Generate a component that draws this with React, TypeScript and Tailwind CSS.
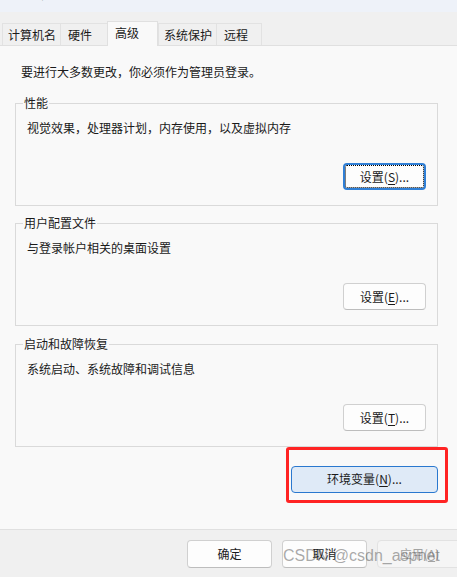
import React from "react";

const cjk = "font-['Noto_Sans_CJK_SC','Noto_Sans',sans-serif]";

type Tab = { label: string; w: string; pl: string; active?: boolean };

const tabs: Tab[] = [
  { label: "计算机名", w: "w-[58px]", pl: "pl-[5px]" },
  { label: "硬件", w: "w-[47px]", pl: "pl-[7px]" },
  { label: "高级", w: "w-[51px]", pl: "pl-[7px]", active: true },
  { label: "系统保护", w: "w-[58px]", pl: "pl-[5px]" },
  { label: "远程", w: "w-[46px]", pl: "pl-[7px]" },
];

const Mn = ({ children }: { children: React.ReactNode }) => (
  <span className="underline underline-offset-[2px] decoration-1">{children}</span>
);

const SetButton = ({ k, focused }: { k: string; focused?: boolean }) => (
  <button
    type="button"
    className={
      focused
        ? "self-end h-[27px] w-[83px] rounded-[4px] border-2 border-[#2f7fd6] bg-[#fdfdfd] text-[12px] leading-[16px] text-[#1a1a1a] outline-1 outline-dotted outline-black outline-offset-[-3px]"
        : "self-end h-[27px] w-[83px] rounded-[4px] border border-[#d0d0d0] border-b-[#bdbdbd] bg-[#fdfdfd] text-[12px] leading-[16px] text-[#1a1a1a]"
    }
  >
    设置(<Mn>{k}</Mn>)...
  </button>
);

type GroupProps = {
  title: string;
  desc: string;
  k: string;
  className?: string;
  focused?: boolean;
};

const Group = ({ title, desc, k, className = "", focused }: GroupProps) => (
  <div
    className={`relative ml-[15px] mr-[19px] flex h-[103px] flex-col border border-[#dadada] pl-[11px] pr-[11px] pt-[16px] ${className}`}
  >
    <span className="absolute left-[7px] -top-[9px] bg-[#f9f9f9] px-[1px] text-[12px] leading-[16px] text-[#1a1a1a]">
      {title}
    </span>
    <p className="text-[12px] leading-[16px] text-[#1a1a1a]">{desc}</p>
    <div className="mt-[27px] flex justify-end">
      <SetButton k={k} focused={focused} />
    </div>
  </div>
);

const FooterButton = ({
  children,
  disabled,
}: {
  children: React.ReactNode;
  disabled?: boolean;
}) => (
  <button
    type="button"
    className={
      disabled
        ? "h-[28px] w-[85px] shrink-0 rounded-[4px] border border-[#e2e2e2] bg-[#f5f5f5] text-[12px] leading-[16px] text-[#a3a3a3]"
        : "h-[28px] w-[85px] shrink-0 rounded-[4px] border border-[#d0d0d0] border-b-[#bdbdbd] bg-[#fdfdfd] text-[12px] leading-[16px] text-[#1a1a1a]"
    }
  >
    {children}
  </button>
);

export default function App() {
  return (
    <div className={`relative h-[577px] w-[457px] overflow-hidden bg-[#f9f9f9] ${cjk}`}>
      {/* title bar, cut off at the top */}
      <div className="h-[12px] overflow-hidden bg-[#eef2f9] pl-[4px]">
        <div className="-mt-[14px] text-[12px] leading-[16px] text-[#1a1a1a]">系统属性</div>
      </div>

      {/* tabs */}
      <div className="flex h-[34px] items-end border-b border-[#e0e0e0] bg-[#f0f0f0] pl-[2px]">
        {tabs.map((t, i) =>
          t.active ? (
            <div
              key={t.label}
              className={`relative z-10 -mb-px flex h-[25px] ${t.w} items-center border-x border-t border-[#e0e0e0] bg-[#f9f9f9] pb-[3px] ${t.pl} text-[12px] leading-[16px] text-[#1a1a1a]`}
            >
              {t.label}
            </div>
          ) : (
            <div
              key={t.label}
              className={`flex h-[22px] ${t.w} items-center border-t border-l ${
                i === tabs.length - 1 ? "border-r" : ""
              } border-[#e2e2e2] bg-[#f0f0f0] ${t.pl} text-[12px] leading-[16px] text-[#1a1a1a]`}
            >
              {t.label}
            </div>
          )
        )}
      </div>

      {/* page */}
      <div className="h-[483px] pt-[18px]">
        <p className="pl-[21px] text-[12px] leading-[16px] text-[#1a1a1a]">
          要进行大多数更改，你必须作为管理员登录。
        </p>

        <Group
          className="mt-[23px]"
          title="性能"
          desc="视觉效果，处理器计划，内存使用，以及虚拟内存"
          k="S"
          focused
        />
        <Group
          className="mt-[17px]"
          title="用户配置文件"
          desc="与登录帐户相关的桌面设置"
          k="E"
        />
        <Group
          className="mt-[18px]"
          title="启动和故障恢复"
          desc="系统启动、系统故障和调试信息"
          k="T"
        />

        <div className="mr-[19px] mt-[18px] flex justify-end">
          <div className="relative">
            <button
              type="button"
              className="h-[27px] w-[147px] rounded-[4px] border border-[#2a78cf] bg-[#dfeaf7] text-[12px] leading-[16px] text-[#1a1a1a]"
            >
              环境变量(<Mn>N</Mn>)...
            </button>
            <div className="pointer-events-none absolute -left-[5px] -right-[10px] -top-[18px] -bottom-[10px] rounded-[3px] border-[3px] border-[#ff2424]" />
          </div>
        </div>
      </div>

      {/* footer */}
      <div className="flex h-[48px] gap-[10px] border-t border-[#e0e0e0] bg-[#f0f0f0] pl-[187px] pt-[10px]">
        <FooterButton>确定</FooterButton>
        <FooterButton>取消</FooterButton>
        <FooterButton disabled>
          应用(<Mn>A</Mn>)
        </FooterButton>
      </div>

      {/* watermark */}
      <div className="pointer-events-none absolute left-[283px] top-[547px] font-['Liberation_Sans',Arial,sans-serif] text-[16px] leading-[18px] text-[#555555]/50">
        CSDN @csdn_aspnet
      </div>
    </div>
  );
}
